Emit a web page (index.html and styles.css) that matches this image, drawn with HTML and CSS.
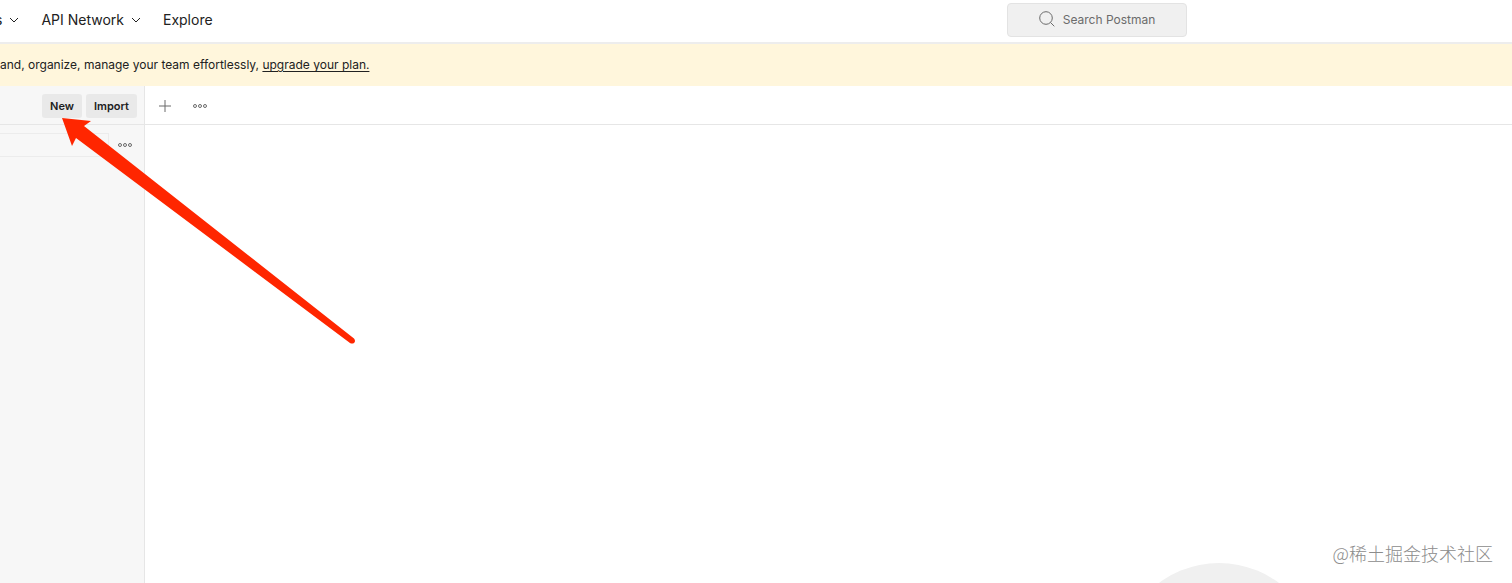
FILE: index.html
```html
<!DOCTYPE html>
<html lang="en">

<head>
    <meta charset="UTF-8">
    <meta name="viewport" content="width=device-width, initial-scale=1.0">
    <title>Postman</title>
    <link rel="stylesheet" href="styles.css">
</head>

<body>

    <header class="topbar">
        <nav class="nav">
            <button class="nav-item" type="button">s
                <svg class="chevron" viewBox="0 0 10 10"><path d="M1 3l4 4 4-4" /></svg>
            </button>
            <button class="nav-item" type="button">API Network
                <svg class="chevron" viewBox="0 0 10 10"><path d="M1 3l4 4 4-4" /></svg>
            </button>
            <a class="nav-item" href="#">Explore</a>
        </nav>
        <button class="search" type="button">
            <svg class="search-icon" viewBox="0 0 16 16"><circle cx="7" cy="7" r="6.3" /><path d="M11.5 11.5l3.8 3.8" /></svg>
            Search Postman
        </button>
    </header>

    <div class="banner">
        <p>and, organize, manage your team effortlessly, <a href="#">upgrade your plan.</a></p>
    </div>

    <div class="workspace">
        <aside class="sidebar">
            <div class="sidebar-head">
                <button class="btn" type="button">New</button>
                <button class="btn" type="button">Import</button>
            </div>
            <div class="filter-row">
                <input class="filter" type="text" aria-label="Filter">
                <button class="icon-btn" type="button" aria-label="More options">
                    <svg class="dots" viewBox="0 0 14 6"><circle cx="2" cy="3" r="1.5" /><circle cx="7" cy="3" r="1.5" /><circle cx="12" cy="3" r="1.5" /></svg>
                </button>
            </div>
        </aside>

        <main class="content">
            <div class="tabs">
                <button class="icon-btn" type="button" aria-label="New tab">
                    <svg class="plus" viewBox="0 0 12 12"><path d="M6 0v12M0 6h12" /></svg>
                </button>
                <button class="icon-btn" type="button" aria-label="Tab options">
                    <svg class="dots" viewBox="0 0 14 6"><circle cx="2" cy="3" r="1.5" /><circle cx="7" cy="3" r="1.5" /><circle cx="12" cy="3" r="1.5" /></svg>
                </button>
            </div>
            <div class="planet"></div>
            <div class="watermark" lang="zh-CN">@稀土掘金技术社区</div>
        </main>
    </div>

    <!-- Arrow pointing at the New button -->
    <svg class="arrow" viewBox="0 0 294 226">
        <path d="M0 0L29 3L22 8L292 220.500Q294 223 292 225Q290 226 288 225L14 20L10 28Z" />
    </svg>

</body>

</html>
```

FILE: styles.css
```css
* {
    box-sizing: border-box;
}

body {
    font-family: Inter, "Noto Sans CJK SC", sans-serif;
    margin: 0;
    min-height: 100vh;
    display: flex;
    flex-direction: column;
    position: relative;
    overflow: hidden;
    background: #fff;
    color: #212121;
}

button {
    font-family: inherit;
    border: 0;
    padding: 0;
    background: none;
    color: inherit;
}

svg {
    display: block;
    fill: none;
    stroke: currentColor;
}

/* Top bar */
.topbar {
    display: flex;
    justify-content: space-between;
    height: 44px;
    padding: 3px 325px 0 0;
    border-bottom: 2px solid #ededed;
}

.nav {
    display: flex;
    align-items: center;
    gap: 22px;
    height: 34px;
    margin-left: -5px;
}

.nav-item {
    display: flex;
    align-items: center;
    gap: 7px;
    font-size: 14px;
    line-height: 20px;
    color: #212121;
    text-decoration: none;
}

.chevron {
    width: 10px;
    height: 10px;
}

.search {
    display: flex;
    align-items: center;
    justify-content: center;
    gap: 8px;
    width: 180px;
    height: 34px;
    padding-bottom: 2px;
    font-size: 12px;
    color: #6b6b6b;
    background: #f0f0f0;
    border: 1px solid #e3e3e3;
    border-radius: 4px;
}

.search-icon {
    width: 16px;
    height: 16px;
}

/* Upgrade banner */
.banner {
    display: flex;
    align-items: center;
    height: 42px;
    background: #fff6dc;
}

.banner p {
    margin: 0;
    font-size: 12px;
    line-height: 20px;
    white-space: nowrap;
}

.banner a {
    color: inherit;
    text-underline-offset: 2px;
}

/* Workspace */
.workspace {
    flex: 1;
    display: flex;
}

.sidebar {
    width: 145px;
    background: #f7f7f7;
    border-right: 1px solid #e6e6e6;
}

.sidebar-head {
    display: flex;
    align-items: center;
    justify-content: flex-end;
    gap: 4px;
    height: 39px;
    padding: 2px 7px 0 0;
    border-bottom: 1px solid #e6e6e6;
}

.btn {
    height: 24px;
    padding: 0 8px;
    font-size: 11px;
    font-weight: 600;
    background: #e9e9e9;
    border-radius: 3px;
}

.filter-row {
    display: flex;
    align-items: center;
    justify-content: space-between;
    padding: 8px 12px 0 0;
}

.filter {
    width: 109px;
    height: 24px;
    background: transparent;
    border: 1px solid #ececec;
    border-left: 0;
}

.icon-btn {
    color: #6b6b6b;
}

.dots {
    width: 14px;
    height: 6px;
}

.plus {
    width: 12px;
    height: 12px;
}

.content {
    flex: 1;
    position: relative;
    overflow: hidden;
}

.tabs {
    display: flex;
    align-items: center;
    gap: 22px;
    height: 39px;
    padding: 2px 0 0 14px;
    border-bottom: 1px solid #e6e6e6;
}

/* Top of the empty state illustration */
.planet {
    position: absolute;
    right: 193px;
    bottom: -180px;
    width: 200px;
    height: 200px;
    border-radius: 50%;
    background: #f0f0f0;
}

.watermark {
    position: absolute;
    right: 19px;
    bottom: 17px;
    font-family: "Noto Sans CJK SC", sans-serif;
    font-size: 18px;
    font-weight: 300;
    line-height: 26px;
    color: #8c8c8c;
}

.arrow {
    position: absolute;
    left: 62px;
    top: 118px;
    width: 294px;
    height: 226px;
    fill: #ff2600;
    stroke: none;
}
```
